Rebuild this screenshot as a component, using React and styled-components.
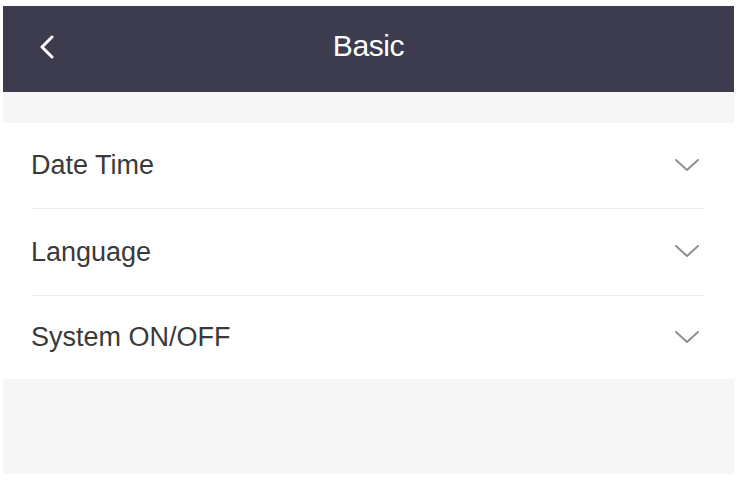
import React from 'react';
import styled, { createGlobalStyle } from 'styled-components';

const GlobalStyle = createGlobalStyle`
  html, body {
    margin: 0;
    padding: 0;
    background: #ffffff;
  }
  body {
    font-family: "Liberation Sans", Arial, sans-serif;
  }
`;

const Frame = styled.div`
  margin: 6px 3px 0;
  width: 731px;
  background: #f6f6f6;
`;

const Header = styled.div`
  height: 86px;
  box-sizing: border-box;
  padding-bottom: 6px;
  background: #3d3c4f;
  display: flex;
  align-items: center;
  justify-content: center;
  position: relative;
`;

const BackButton = styled.button`
  position: absolute;
  left: 30px;
  top: 50%;
  transform: translateY(-50%);
  margin-top: -2px;
  background: none;
  border: 0;
  padding: 6px;
  display: flex;
  cursor: pointer;
`;

const Title = styled.h1`
  margin: 0;
  color: #ffffff;
  font-size: 30px;
  font-weight: 400;
  letter-spacing: -0.4px;
`;

const Spacer = styled.div`
  height: ${p => p.$h}px;
`;

const List = styled.div`
  background: #ffffff;
  padding: 0 30px 0 28px;
`;

const Row = styled.div`
  height: ${p => p.$h}px;
  display: flex;
  align-items: center;
  justify-content: space-between;
  border-bottom: ${p => (p.$last ? 'none' : '1px solid #eeeeee')};
`;

const Label = styled.span`
  font-size: 27px;
  color: #3a3a3a;
`;

const Chevron = styled.svg`
  width: 26px;
  height: 14px;
  margin-right: 4px;
  margin-top: -2px;
`;

const ChevronDown = () => (
  <Chevron viewBox="0 0 26 14" fill="none">
    <path d="M2 2 L13 12 L24 2" stroke="#8e8e98" strokeWidth="2" strokeLinecap="round" strokeLinejoin="round" />
  </Chevron>
);

const items = ['Date Time', 'Language', 'System ON/OFF'];
const heights = [85, 86, 83];

export default function App() {
  return (
    <>
      <GlobalStyle />
      <Frame>
        <Header>
          <BackButton aria-label="back">
            <svg width="16" height="24" viewBox="0 0 16 24" fill="none">
              <path d="M13 2 L3 12 L13 22" stroke="#ffffff" strokeWidth="3" strokeLinecap="round" strokeLinejoin="round" />
            </svg>
          </BackButton>
          <Title>Basic</Title>
        </Header>
        <Spacer $h={31} />
        <List>
          {items.map((item, i) => (
            <Row key={item} $h={heights[i]} $last={i === items.length - 1}>
              <Label>{item}</Label>
              <ChevronDown />
            </Row>
          ))}
        </List>
        <Spacer $h={95} />
      </Frame>
    </>
  );
}
